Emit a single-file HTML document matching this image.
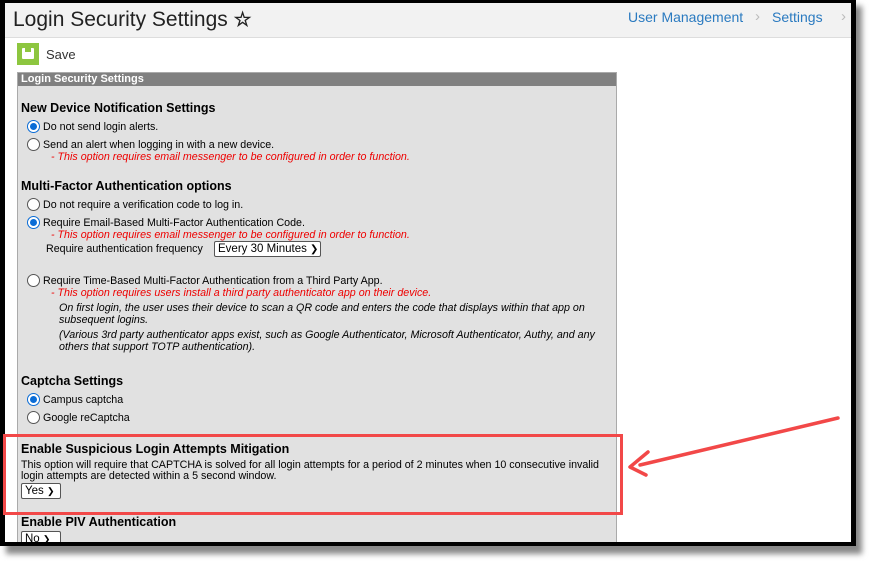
<!DOCTYPE html>
<html><head><meta charset="utf-8"><style>
*{margin:0;padding:0;box-sizing:border-box}
body{width:870px;height:563px;background:#fff;position:relative;overflow:hidden;font-family:"Liberation Sans",Arial,sans-serif;font-size:10.7px;color:#000}
.shadow{position:absolute;left:6px;top:6px;width:856px;height:548px;background:#888;filter:blur(3px)}
.frame{position:absolute;left:0;top:0;width:856px;height:546px;background:#000}
.inner{position:absolute;left:5px;top:3px;width:846px;height:539px;background:#fff;overflow:hidden}
.hdr{position:absolute;left:0;top:0;width:846px;height:35px;background:#f2f2f2;border-bottom:1px solid #ddd}
.title{position:absolute;left:8px;top:4px;font-size:21px;color:#222}
.crumb{position:absolute;top:6px;font-size:14px;color:#2a7ac0}
.chev{position:absolute;top:5px;font-size:15px;color:#bbb}
.save{position:absolute;left:12px;top:40px;width:22px;height:22px;background:#8dc63f}
.savet{position:absolute;left:41px;top:44px;font-size:13px;color:#333}
.panel{position:absolute;left:12px;top:69px;width:600px;height:480px;background:#e1e1e1;border:1px solid #aaa}
.ph{position:absolute;left:0;top:0;width:598px;height:13px;background:#808080;color:#fff;font-weight:bold;font-size:11px;padding-left:3px;line-height:12px}
.t{position:absolute;white-space:nowrap}
.h{font-weight:bold;font-size:12.5px}
.red{color:#e00;font-style:italic}
.it{font-style:italic}
.r{position:absolute;width:13px;height:13px;border-radius:50%;border:1px solid #555;background:#fff}
.r.on{border:1px solid #0a6cd6}
.r.on::after{content:"";position:absolute;left:2px;top:2px;width:7px;height:7px;border-radius:50%;background:#0a6cd6}
.sel{position:absolute;height:16px;border:1px solid #555;background:#fff;font-size:11.5px;padding-left:3px;line-height:14px;border-radius:2px}
</style></head><body>
<div class="shadow"></div>
<div class="frame"></div>
<div class="inner">
<div class="hdr">
<div class="title">Login Security Settings <span style="font-size:20px;font-weight:bold">☆</span></div>
<div class="crumb" style="left:623px">User Management</div>
<div class="chev" style="left:750px">›</div>
<div class="crumb" style="left:767px">Settings</div>
<div class="chev" style="left:836px">›</div>
</div>
<div class="save"><div style="position:absolute;left:5px;top:5px;width:12px;height:11px;background:#fff;border-radius:1px"></div><div style="position:absolute;left:8px;top:5px;width:6px;height:4px;background:#8dc63f"></div></div>
<div class="savet">Save</div>
<div class="panel">
<div class="ph">Login Security Settings</div>
<div class="t h" style="left:3px;top:28px">New Device Notification Settings</div>
<div class="r on" style="left:9px;top:47px"></div><div class="t" style="left:25px;top:48px">Do not send login alerts.</div>
<div class="r" style="left:9px;top:65px"></div><div class="t" style="left:25px;top:66px">Send an alert when logging in with a new device.</div>
<div class="t red" style="left:33px;top:78px">- This option requires email messenger to be configured in order to function.</div>
<div class="t h" style="left:3px;top:106px">Multi-Factor Authentication options</div>
<div class="r" style="left:9px;top:125px"></div><div class="t" style="left:25px;top:126px">Do not require a verification code to log in.</div>
<div class="r on" style="left:9px;top:143px"></div><div class="t" style="left:25px;top:144px">Require Email-Based Multi-Factor Authentication Code.</div>
<div class="t red" style="left:33px;top:156px">- This option requires email messenger to be configured in order to function.</div>
<div class="t" style="left:28px;top:170px">Require authentication frequency</div>
<div class="sel" style="left:196px;top:168px;width:107px">Every 30 Minutes <span style="font-size:10px">&#10095;</span></div>
<div class="r" style="left:9px;top:201px"></div><div class="t" style="left:25px;top:202px">Require Time-Based Multi-Factor Authentication from a Third Party App.</div>
<div class="t red" style="left:33px;top:214px">- This option requires users install a third party authenticator app on their device.</div>
<div class="t it" style="left:41px;top:229px">On first login, the user uses their device to scan a QR code and enters the code that displays within that app on</div>
<div class="t it" style="left:41px;top:241px">subsequent logins.</div>
<div class="t it" style="left:41px;top:256px">(Various 3rd party authenticator apps exist, such as Google Authenticator, Microsoft Authenticator, Authy, and any</div>
<div class="t it" style="left:41px;top:268px">others that support TOTP authentication).</div>
<div class="t h" style="left:3px;top:301px">Captcha Settings</div>
<div class="r on" style="left:9px;top:320px"></div><div class="t" style="left:25px;top:321px">Campus captcha</div>
<div class="r" style="left:9px;top:338px"></div><div class="t" style="left:25px;top:339px">Google reCaptcha</div>
<div class="t h" style="left:3px;top:369px">Enable Suspicious Login Attempts Mitigation</div>
<div class="t" style="left:3px;top:386px">This option will require that CAPTCHA is solved for all login attempts for a period of 2 minutes when 10 consecutive invalid</div>
<div class="t" style="left:3px;top:397px">login attempts are detected within a 5 second window.</div>
<div class="sel" style="left:3px;top:410px;width:40px">Yes <span style="font-size:9px">&#10095;</span></div>
<div class="t h" style="left:3px;top:442px">Enable PIV Authentication</div>
<div class="sel" style="left:3px;top:458px;width:40px">No <span style="font-size:9px">&#10095;</span></div>
</div>
</div>
<div style="position:absolute;left:3px;top:434px;width:620px;height:81px;border:3px solid #f24848"></div>
<svg style="position:absolute;left:0;top:0" width="870" height="563"><line x1="838" y1="418" x2="640" y2="465" stroke="#f24848" stroke-width="3.5" stroke-linecap="round"/><polyline points="648,452 630,467 646,475" fill="none" stroke="#f24848" stroke-width="3.5" stroke-linecap="round" stroke-linejoin="round"/></svg>
</body></html>
